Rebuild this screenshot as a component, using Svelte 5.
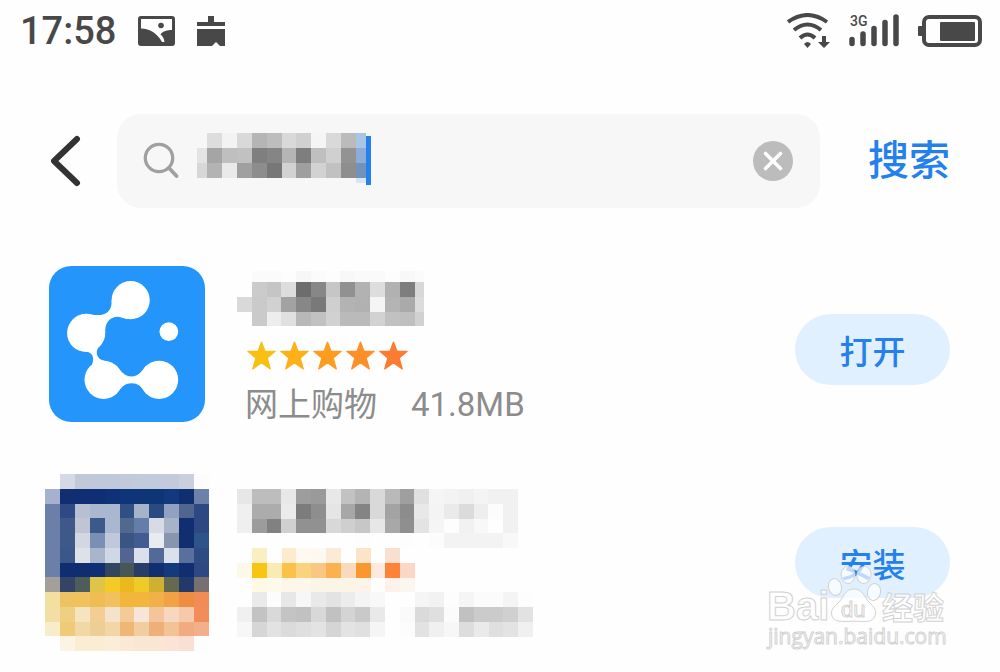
<script lang="ts">
  interface Mosaic {
    xs: number[];
    ys: number[];
    rows: string[];
  }

  // Evenly spaced cell edges
  function edges(count: number, size: number) {
    return Array.from({ length: count + 1 }, (_, i) => Math.round((i * size) / count));
  }

  // '..' is an empty cell, two digits are a grey, six digits a full colour
  function cells(m: Mosaic) {
    return m.rows.flatMap((row, r) =>
      row.split(' ').map((code, c) => ({
        x: m.xs[c],
        y: m.ys[r],
        w: m.xs[c + 1] - m.xs[c],
        h: m.ys[r + 1] - m.ys[r],
        fill: code === '..' ? 'none' : '#' + (code.length === 2 ? code.repeat(3) : code),
      }))
    );
  }

  const queryMosaic: Mosaic = {
    xs: [0, 10, 25, 40, 55, 70, 85, 99, 114, 129, 144, 159, 169],
    ys: [0, 15, 30, 45, 50],
    rows: [
      '.. dd f3 d9 b5 bd d9 d0 f5 d9 bb a9c4e4',
      'e4 a5 bf c1 7f 85 b5 7e bf d0 93 8dacd7',
      'd7 b3 ea a0 8d 77 d2 9f d2 c1 8e 7192b9',
      '.. .. .. .. .. .. .. .. .. .. .. d8e5f5',
    ],
  };

  const titleMosaic: Mosaic = {
    xs: [0, 15, 30, 44, 59, 74, 89, 103, 118, 133, 148, 163, 178, 187],
    ys: [0, 11, 26, 41, 55],
    rows: [
      '.. fb fb fd f7 fb fd f8 fa fa fd f8 fb',
      '.. cb c5 dd 6d 87 c6 91 b2 dd b1 7e d8',
      'd9 ca d1 a2 87 79 cf b3 b1 f5 b4 aa dc',
      '.. ca ed e0 b8 c1 d1 ba ba d2 c1 bf d1',
    ],
  };

  const secondTitleMosaic: Mosaic = {
    xs: edges(19, 281),
    ys: [0, 15, 30, 44, 59],
    rows: [
      'e7 bd bd e8 9d 9a e8 c2 b4 d9 b9 9f e0 f5 f3 f0 f4 f1 f1',
      'f0 ac ac eb 7c 8e e5 a7 84 d9 a3 8c e8 f4 ea db ee fc f1',
      'ef 9c 81 d0 91 91 d8 cf c7 e7 a8 8f e3 f5 fd f1 f8 fe f1',
      '.. .. .. .. .. .. .. .. fd .. .. fd .. fc f3 f3 f3 f3 f8',
    ],
  };

  const secondStarsMosaic: Mosaic = {
    xs: edges(12, 178),
    ys: [0, 15, 30, 44],
    rows: [
      '.. faefc2 .. fceccd fefaf2 fdf9f2 fbead5 .. fae4ca .. f9dfcf ..',
      'fdf9e8 f8c516 faeab4 fac24b f9d37e fac782 fab150 fadabd f99831 fce9df fd8338 fbd7c5',
      'fe fdf9e5 fdfaec fdf6e9 fdf6ea fbf5e8 fbf5e8 fbf5e8 fcf4e8 fe fcf1eb fcf6f0',
    ],
  };

  const secondMetaMosaic: Mosaic = {
    xs: edges(20, 296),
    ys: [0, 15, 30, 45],
    rows: [
      '.. ea fc e7 f7 e9 e3 ec f4 f8 .. .. f5 f2 fd f5 fb fb f4 fd',
      'f0 c3 d9 c4 c1 d8 c1 d4 c9 e9 .. fa da df fb c1 cb cb d0 e2',
      'f7 d6 e2 db df e3 d5 e3 e0 f5 .. fc e2 f0 f7 dd ea df e3 f0',
    ],
  };

  const dxIconMosaic: Mosaic = {
    xs: edges(11, 164),
    ys: edges(12, 177),
    rows: [
      '.. d5d9e6 c1c8d8 c0c8dc c0c9dc c2c9da c0ccdb c0cbdd c2cadb c9cfde fc',
      'a5b1ce 102e70 102e73 102e73 0f3177 0f3579 0f3577 0f3674 12397d 102f70 6d80aa',
      '6b7fa9 2e4983 b7bfd2 a9b7cf a9b7d1 305083 a6b4ca 2b4a80 91a1c2 50668f 2d4883',
      '6b7fa9 3e5989 bfc5d5 3b5989 a9b7d1 52698f 647da9 d7dbe5 a9b3c7 102e70 2d4883',
      '6b7fa9 3e5989 d2d7e1 7b8eb4 bfc9db 3b5583 405c90 e8ebf0 8696ac 102e70 2d548b',
      '6b7fa9 3b5789 dee1e8 a8b5cb d0d8e6 52648f dae1ed 546a96 dae1ed 58719c 2d4c83',
      '6b7fa9 0f2e70 0f2e70 102e73 31465f 465758 273e68 102e70 123a7d 102e70 2d4883',
      'a39f99 334466 4d5d5a dfc448 f3ca28 ebb81e efcb29 cfb030 646950 223969 776f70',
      'f4dfa3 edc263 f0c15d efbd51 f2c05c f2b63b f3b63d f1b148 f0a245 ee8c40 f18d54',
      'f4dea5 efd083 f6e4be f2cd94 f4e2ca f3cb99 f7e6d7 f4c49b f6d8bf f5c9ab f08d58',
      'f7edcb edcb79 f1d8a5 efce95 f2d6a6 eeb776 f2cda0 efaf78 f3c396 f2ab80 f3af89',
      '.. fbf4e5 faedd4 faedd4 fbedd9 fbe8d5 fae7d3 fbe5d3 fbe4d5 fae0d4 fd',
    ],
  };

  const stars = ['#f8c013', '#fdb018', '#fd9d1d', '#fd8f28', '#fc7b33'];

  let query = $state('');
</script>

{#snippet mosaic(m: Mosaic)}
  {@const w = m.xs[m.xs.length - 1]}
  {@const h = m.ys[m.ys.length - 1]}
  <svg width={w} height={h} viewBox="0 0 {w} {h}" shape-rendering="crispEdges" aria-hidden="true">
    {#each cells(m) as cell}
      <rect x={cell.x} y={cell.y} width={cell.w} height={cell.h} fill={cell.fill} />
    {/each}
  </svg>
{/snippet}

<div class="screen">
  <header class="statusBar">
    <div class="statusLeft">
      <time class="clock">17:58</time>
      <svg width="37" height="30" viewBox="0 0 37 30" aria-hidden="true">
        <rect width="37" height="30" rx="3" fill="#484848" />
        <path d="M3 3h31v11C29 14 25 15 22.500 18.500C25 20 26 23 26.500 26H24C19 17 12 13 3 12.500z" fill="#fff" />
        <circle cx="23" cy="9.500" r="2.800" fill="#484848" />
      </svg>
      <svg width="28" height="30" viewBox="0 0 28 30" fill="#484848" aria-hidden="true">
        <path d="M11 0h6v6h11v4H0V6h11zM0 13h28v17h-5l-4-4-4 4H0z" />
      </svg>
    </div>
    <div class="statusRight">
      <svg width="43" height="36" viewBox="0 0 43 36" fill="none" stroke="#484848" stroke-width="4" aria-hidden="true">
        <path d="M1 9q19.500-14 39 0M7 17q13.500-11 27 0M13 25q7.500-7 15 0" />
        <path d="M17 31q3.500-4 7 0l-3.500 4z" fill="#484848" stroke="none" />
        <path d="M35 23h4v6h4l-6 6-6-6h4z" fill="#484848" stroke="none" />
      </svg>
      <svg width="52" height="34" viewBox="0 0 52 34" aria-hidden="true">
        <text x="2" y="12" class="network">3G</text>
        <path d="M4 25.500v4M15 20v9.500M26 14.500v15M37 8.500v21M48 3v26.500" stroke="#484848" stroke-width="5.500" stroke-linecap="round" fill="none" />
      </svg>
      <svg width="64" height="32" viewBox="0 0 64 32" aria-hidden="true">
        <rect x="6" y="2" width="56" height="28" rx="5" fill="none" stroke="#484848" stroke-width="4" />
        <rect y="11" width="5" height="10" rx="1" fill="#484848" />
        <rect x="22" y="7" width="35" height="19" rx="1" fill="#484848" />
      </svg>
    </div>
  </header>

  <form class="searchRow" onsubmit={(e) => e.preventDefault()}>
    <button type="button" class="iconBtn" aria-label="返回">
      <svg width="32" height="52" viewBox="0 0 32 52" fill="none" stroke="#333" stroke-width="6" stroke-linecap="round" stroke-linejoin="round">
        <path d="M28 4 5 26 28 48" />
      </svg>
    </button>
    <div class="searchBox">
      <label class="field">
        <svg width="36" height="38" viewBox="0 0 36 38" fill="none" stroke="#a0a0a0" stroke-width="3.300" stroke-linecap="round" aria-hidden="true">
          <circle cx="16" cy="16" r="13.700" />
          <path d="m26 26 7.500 8" stroke-width="3.800" />
        </svg>
        <span class="query">
          {@render mosaic(queryMosaic)}
          <span class="caret"></span>
        </span>
        <input type="text" bind:value={query} aria-label="搜索应用" />
      </label>
      <button type="button" class="iconBtn" aria-label="清除" onclick={() => (query = '')}>
        <svg width="40" height="40" viewBox="0 0 40 40">
          <circle cx="20" cy="20" r="20" fill="#bcbcbc" />
          <path d="m12.500 12.500 15 15m0-15-15 15" stroke="#fff" stroke-width="3.600" stroke-linecap="round" />
        </svg>
      </button>
    </div>
    <button type="submit" class="searchBtn">搜索</button>
  </form>

  <ul class="appList">
    <li class="appRow">
      <div class="icon raised">
        <svg width="156" height="156" viewBox="30 35 466 466" aria-hidden="true">
          <rect x="30" y="35" width="466" height="466" rx="66" fill="#2496fb" />
          <g fill="#fff">
            <circle cx="274" cy="137" r="57" />
            <circle cx="141" cy="235" r="57" />
            <circle cx="193" cy="375" r="57" />
            <circle cx="359" cy="375" r="57" />
            <circle cx="388" cy="231" r="28" />
            <path d="M217 137C219 166 204 188 155 180L198 235C196 205 212 185 240 187L265 194Z" />
            <path d="M140 291C158 291 168 308 158 331L176 345L196 318C174 316 165 292 180 275L196 250Z" />
            <path d="M228 330C246 349 255 365 276 365C298 365 306 349 324 330V420C305 394 297 385 276 385C255 385 246 398 228 420Z" />
          </g>
        </svg>
      </div>
      <div class="info raisedInfo">
        {@render mosaic(titleMosaic)}
        <div class="stars" role="img" aria-label="5 星">
          {#each stars as color}
            <svg width="29" height="29" viewBox="0 0 28 28">
              <path d="M14 1 17.400 10H27.200L19.500 16.500 22.500 27 14 21 5.500 27 8.500 16.500.8 10h9.800z" fill={color} stroke={color} stroke-width="1.200" stroke-linejoin="round" />
            </svg>
          {/each}
        </div>
        <div class="meta">
          <span>网上购物</span>
          <span>41.8MB</span>
        </div>
      </div>
      <button type="button" class="actionBtn">打开</button>
    </li>
    <li class="appRow">
      <div class="icon">{@render mosaic(dxIconMosaic)}</div>
      <div class="info">
        {@render mosaic(secondTitleMosaic)}
        {@render mosaic(secondStarsMosaic)}
        {@render mosaic(secondMetaMosaic)}
      </div>
      <button type="button" class="actionBtn">安装</button>
    </li>
  </ul>

  <div class="watermark">
    <svg width="184" height="86" viewBox="0 0 184 86">
      <g class="paw">
        <ellipse cx="69" cy="21" rx="6.500" ry="8.500" transform="rotate(-12 69 21)" />
        <ellipse cx="82" cy="9" rx="7" ry="8.500" />
        <ellipse cx="98" cy="9" rx="7" ry="8.500" transform="rotate(10 98 9)" />
        <ellipse cx="108" cy="26" rx="6.500" ry="8.500" transform="rotate(12 108 26)" />
        <path d="M88 23c9 0 10 8 15 13s8 8 6 14-8 6-21 5c-13 1-20 1-22-5s2-9 7-14 6-13 15-13z" />
      </g>
      <text x="1" y="54" class="markBai">Bai</text>
      <text x="75" y="51" class="markDu">du</text>
      <text x="116" y="53" class="markCn">经验</text>
      <text x="2" y="78" class="markUrl">jingyan.baidu.com</text>
    </svg>
  </div>
</div>

<style>
  :global(body) {
    background: #fefefe;
  }

  .screen {
    position: relative;
    box-sizing: border-box;
    min-height: 100vh;
    overflow: hidden;
    font-family: Roboto, 'Noto Sans CJK SC', sans-serif;
  }

  svg {
    display: block;
    flex: none;
  }

  button {
    flex: none;
    padding: 0;
    border: 0;
    background: none;
    font-family: inherit;
    white-space: nowrap;
    cursor: pointer;
  }

  .statusBar {
    display: flex;
    align-items: center;
    justify-content: space-between;
    height: 62px;
    padding: 0 18px 0 20px;
  }

  .statusLeft {
    display: flex;
    align-items: center;
    gap: 22px;
  }

  .statusRight {
    display: flex;
    align-items: center;
    gap: 18px;
  }

  .clock {
    font-size: 38px;
    font-weight: 500;
    line-height: 48px;
    color: #484848;
  }

  .network {
    font-size: 14px;
    font-weight: 500;
    fill: #484848;
  }

  .searchRow {
    display: flex;
    align-items: center;
    margin-top: 52px;
    padding: 0 50px 0 49px;
  }

  .searchBox {
    display: flex;
    flex: 1;
    align-items: center;
    min-width: 0;
    height: 94px;
    margin: 0 48px 0 36px;
    padding: 0 27px 0 26px;
    box-sizing: border-box;
    border-radius: 24px;
    background: #f7f7f7;
  }

  .field {
    display: flex;
    flex: 1;
    align-items: center;
    min-width: 0;
  }

  .query {
    display: flex;
    flex: none;
    margin: 0 0 4px 18px;
  }

  .caret {
    width: 5px;
    height: 49px;
    margin-top: 3px;
    background: #2480ea;
  }

  input {
    flex: 1;
    min-width: 0;
    padding: 0;
    border: 0;
    outline: 0;
    background: none;
    font: inherit;
    font-size: 33px;
  }

  .searchBtn {
    font-size: 41px;
    line-height: 48px;
    font-weight: 500;
    color: #2480ea;
  }

  .appList {
    display: flex;
    flex-direction: column;
    gap: 41px;
    margin: 58px 0 0;
    padding: 0 50px 0 45px;
    list-style: none;
  }

  .appRow {
    display: grid;
    grid-template-columns: 164px 1fr 155px;
    align-items: center;
    column-gap: 28px;
  }

  .icon {
    display: flex;
    justify-content: center;
  }

  .raised {
    margin-bottom: 11px;
  }

  .raisedInfo {
    margin-bottom: 4px;
  }

  .stars {
    display: flex;
    gap: 4px;
    margin: 15px 0;
    padding-left: 10px;
  }

  .meta {
    display: flex;
    gap: 34px;
    padding-left: 8px;
    font-size: 33px;
    line-height: 40px;
    color: #8c8c8c;
  }

  .actionBtn {
    height: 71px;
    border-radius: 36px;
    background: #e0f0fe;
    font-size: 33px;
    font-weight: 500;
    color: #2480ea;
  }

  .watermark {
    position: absolute;
    right: 50px;
    bottom: 20px;
    pointer-events: none;
  }

  .watermark text,
  .paw {
    fill: #fff;
    fill-opacity: 0.7;
    stroke: #d2d2d2;
    stroke-width: 1;
  }

  .markBai {
    font-family: 'Liberation Sans', sans-serif;
    font-size: 40px;
    font-weight: 700;
  }

  .markDu {
    font-family: 'Liberation Sans', sans-serif;
    font-size: 22px;
  }

  .markCn {
    font-family: 'Noto Sans CJK SC', sans-serif;
    font-size: 31px;
    font-weight: 700;
  }

  .markUrl {
    font-family: 'Open Sans', sans-serif;
    font-size: 21px;
  }
</style>
